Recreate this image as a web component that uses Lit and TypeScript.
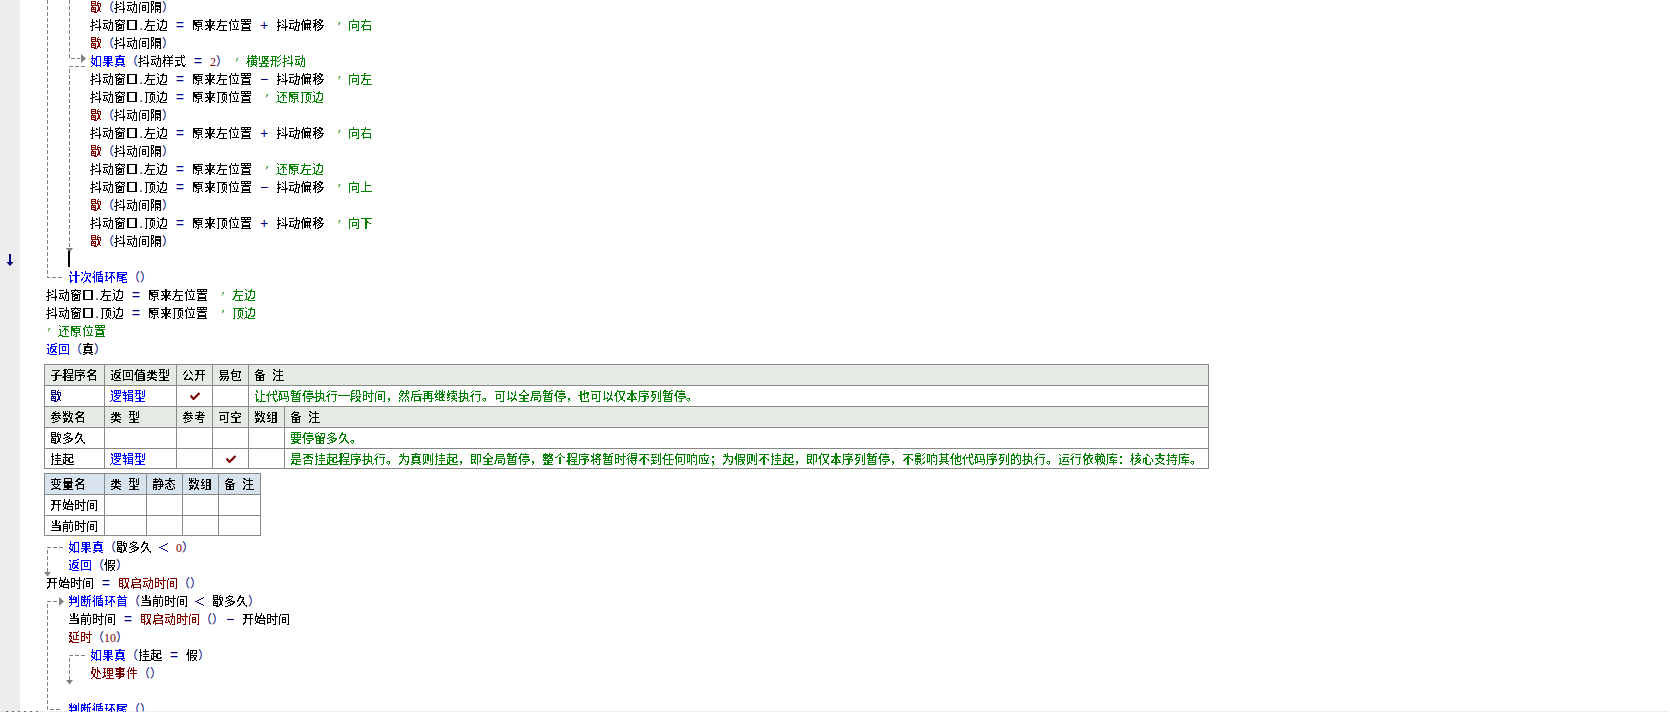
import { LitElement, html, css, svg } from "lit";
import { customElement } from "lit/decorators.js";

type Tok = [string, string];
interface Line { x: number; t: Tok[]; }

const K = "k", N = "n", B = "b", F = "f", C = "c", R = "r", O = "op";

function asciiSplit(text: string) {
  return text.split(/([\x00-\x7f’]+)/).filter((s) => s.length > 0);
}

const eq = (op: string): Tok[] =>
  op === "＜" ? [[N, ` ${op} `]] : [[N, " "], [O, op], [N, " "]];
const note = (s: string, lead = "  "): Tok[] => [[C, `${lead}’ `], [C, s]];
const rest: Tok[] = [[F, "歇"], [N, "（"], [B, "抖动间隔"], [N, "）"]];
const set = (lhs: string, rhs: Tok[], cm: string): Tok[] => [[B, `抖动窗口.${lhs}`], ...eq("="), ...rhs, ...note(cm)];
const calc = (lhs: string, base: string, op: string, cm: string) =>
  set(lhs, [[B, base], ...eq(op), [B, "抖动偏移"]], cm);

const top: Line[] = [
  { x: 90, t: rest },
  { x: 90, t: calc("左边", "原来左位置", "+", "向右") },
  { x: 90, t: rest },
  { x: 90, t: [[K, "如果真"], [N, "（"], [B, "抖动样式"], ...eq("="), [R, "2"], [N, "）"], ...note("横竖形抖动", " ")] },
  { x: 90, t: calc("左边", "原来左位置", "−", "向左") },
  { x: 90, t: set("顶边", [[B, "原来顶位置"]], "还原顶边") },
  { x: 90, t: rest },
  { x: 90, t: calc("左边", "原来左位置", "+", "向右") },
  { x: 90, t: rest },
  { x: 90, t: set("左边", [[B, "原来左位置"]], "还原左边") },
  { x: 90, t: calc("顶边", "原来顶位置", "−", "向上") },
  { x: 90, t: rest },
  { x: 90, t: calc("顶边", "原来顶位置", "+", "向下") },
  { x: 90, t: rest },
  { x: 68, t: [] },
  { x: 68, t: [[K, "计次循环尾"], [N, "（）"]] },
  { x: 46, t: set("左边", [[B, "原来左位置"]], "左边") },
  { x: 46, t: set("顶边", [[B, "原来顶位置"]], "顶边") },
  { x: 46, t: [[C, "’ "], [C, "还原位置"]] },
  { x: 46, t: [[K, "返回"], [N, "（"], [B, "真"], [N, "）"]] },
];

const bottom: Line[] = [
  { x: 68, t: [[K, "如果真"], [N, "（"], [B, "歇多久"], ...eq("＜"), [R, "0"], [N, "）"]] },
  { x: 68, t: [[K, "返回"], [N, "（"], [B, "假"], [N, "）"]] },
  { x: 46, t: [[B, "开始时间"], ...eq("="), [F, "取启动时间"], [N, "（）"]] },
  { x: 68, t: [[K, "判断循环首"], [N, "（"], [B, "当前时间"], ...eq("＜"), [B, "歇多久"], [N, "）"]] },
  { x: 68, t: [[B, "当前时间"], ...eq("="), [F, "取启动时间"], [N, "（）"], [O, "−"], [N, " "], [B, "开始时间"]] },
  { x: 68, t: [[F, "延时"], [N, "（"], [R, "10"], [N, "）"]] },
  { x: 90, t: [[K, "如果真"], [N, "（"], [B, "挂起"], ...eq("="), [B, "假"], [N, "）"]] },
  { x: 90, t: [[F, "处理事件"], [N, "（）"]] },
  { x: 90, t: [] },
  { x: 68, t: [[K, "判断循环尾"], [N, "（）"]] },
];

const check = html`<svg class="check" viewBox="0 0 10 8" width="10" height="8"><path d="M0.5 3.5L3.5 7L9.5 1" fill="none" stroke="#800000" stroke-width="2.2"/></svg>`;

const dashes = [
  "M47.5 0V277.5H62",
  "M69.5 0V58.5H80",
  "M85 66.5H69.5V248",
  "M63 547.5H47.5V572",
  "M57 601.5H47.5V709.5H62",
  "M85 655.5H69.5V680",
];
const arrows = [
  "M81 54L86 58.5L81 63Z",
  "M66 248L73 248L69.5 252.5Z",
  "M44 572L51 572L47.5 576.5Z",
  "M59 597L64 601.5L59 606Z",
  "M66 680L73 680L69.5 684.5Z",
];

@customElement("app-root")
export class AppRoot extends LitElement {
  static styles = css`
    :host { display: block; width: 1670px; height: 712px; overflow: hidden; position: relative; background: #fff;
      font: 12px/18px "Noto Sans CJK SC", "Noto Sans CJK JP", sans-serif; color: #000; }
    .page { display: flex; height: 712px; }
    .gutter { width: 20px; flex: none; background: #ececec; }
    .main { flex: 1; margin-top: -2px; min-width: 0; }
    .line { height: 18px; white-space: pre; line-height: 18px; }
    .a { font: 10px/0 "Liberation Mono", monospace; white-space: pre; }
    .d { font: 12px/0 "Liberation Serif", serif; }
    .op { display: inline-block; width: 12px; text-align: center; color: #000080; font: 14px/0 "Liberation Mono", monospace; }
    .k { color: #0000ff; } .n { color: #000080; } .b { color: #000; }
    .f { color: #800000; } .c { color: #008000; } .r { color: #800000; }
    .fx { filter: url(#crisp); }
    .t { filter: url(#crisp); display: block; }
    table { border-collapse: collapse; table-layout: fixed; margin-left: 24px; }
    td { border: 1px solid #888; padding: 0 0 0 5px; height: 20px; line-height: 18px; overflow: hidden; white-space: pre; box-sizing: border-box; }
    .proc { width: 1165px; margin-top: 6px; }
    .vars { width: 217px; margin-top: 4px; }
    .proc .h td { background: #e4ebe3; }
    .vars .h td { background: #d8e3ee; }
    td.m { text-align: center; padding: 0; }
    .check { display: block; margin: 0 auto; }
    .after { margin-top: 2px; }
    .over { position: absolute; left: 0; top: 0; pointer-events: none; }
    .caret { position: absolute; left: 68px; top: 251px; width: 2px; height: 16px; background: #000; }
    .defs { position: absolute; width: 0; height: 0; }
  `;

  private tok(t: Tok) {
    if (t[0] === O) return html`<span class="op">${t[1]}</span>`;
    return asciiSplit(t[1]).map((p) =>
      t[0] === R
        ? html`<span class="d r">${p}</span>`
        : /[\x00-\x7f’]/.test(p[0])
        ? html`<span class="a ${t[0]}">${p}</span>`
        : t[0] === N && p !== "＜"
        ? html`<span class="n">${p}</span>`
        : html`<span class="${t[0]} fx">${p}</span>`
    );
  }

  private lines(ls: Line[]) {
    return ls.map(
      (l) => html`<div class="line" style="padding-left:${l.x - 20}px">${l.t.map((t) => this.tok(t))}</div>`
    );
  }

  private c(s: string, cls = "") {
    const parts = s.split(" ");
    return html`<span class="t ${cls}">${parts.length === 2
      ? html`${parts[0]}<span class="a"> </span>${parts[1]}`
      : s}</span>`;
  }

  render() {
    return html`
      <svg class="defs"><filter id="crisp" x="-5%" y="-5%" width="110%" height="110%" color-interpolation-filters="sRGB">
        <feComponentTransfer><feFuncA type="discrete" tableValues="0 0 1 1 1"/></feComponentTransfer>
      </filter></svg>
      <div class="page">
        <div class="gutter"></div>
        <div class="main">
          ${this.lines(top)}
          <table class="proc">
            <colgroup><col style="width:60px"/><col style="width:72px"/><col style="width:36px"/><col style="width:36px"/><col style="width:36px"/><col/></colgroup>
            <tr class="h" style="height:21px"><td>${this.c("子程序名")}</td><td>${this.c("返回值类型")}</td><td>${this.c("公开")}</td><td>${this.c("易包")}</td><td colspan="2">${this.c("备 注")}</td></tr>
            <tr style="height:21px"><td>${this.c("歇", "n")}</td><td>${this.c("逻辑型", "k")}</td><td class="m">${check}</td><td></td><td colspan="2">${this.c("让代码暂停执行一段时间，然后再继续执行。可以全局暂停，也可以仅本序列暂停。", "c")}</td></tr>
            <tr class="h" style="height:21px"><td>${this.c("参数名")}</td><td>${this.c("类 型")}</td><td>${this.c("参考")}</td><td>${this.c("可空")}</td><td>${this.c("数组")}</td><td>${this.c("备 注")}</td></tr>
            <tr style="height:21px"><td>${this.c("歇多久")}</td><td></td><td></td><td></td><td></td><td>${this.c("要停留多久。", "c")}</td></tr>
            <tr style="height:20px"><td>${this.c("挂起")}</td><td>${this.c("逻辑型", "k")}</td><td></td><td class="m">${check}</td><td></td><td>${this.c("是否挂起程序执行。为真则挂起，即全局暂停，整个程序将暂时得不到任何响应；为假则不挂起，即仅本序列暂停，不影响其他代码序列的执行。运行依赖库：核心支持库。", "c")}</td></tr>
          </table>
          <table class="vars">
            <colgroup><col style="width:60px"/><col style="width:42px"/><col style="width:36px"/><col style="width:36px"/><col style="width:42px"/></colgroup>
            <tr class="h" style="height:21px"><td>${this.c("变量名")}</td><td>${this.c("类 型")}</td><td>${this.c("静态")}</td><td>${this.c("数组")}</td><td>${this.c("备 注")}</td></tr>
            <tr style="height:21px"><td>${this.c("开始时间")}</td><td></td><td></td><td></td><td></td></tr>
            <tr style="height:20px"><td>${this.c("当前时间")}</td><td></td><td></td><td></td><td></td></tr>
          </table>
          <div class="after">${this.lines(bottom)}</div>
        </div>
      </div>
      <svg class="over" width="1670" height="712" viewBox="0 0 1670 712">
        ${dashes.map((d) => svg`<path d=${d} fill="none" stroke="#808080" stroke-dasharray="4 2"/>`)}
        ${arrows.map((d) => svg`<path d=${d} fill="#808080"/>`)}
        <path d="M9 254h2v8h2.5L10 266 6.5 262H9Z" fill="#000080"/>
        <path d="M0 711.5H1670" fill="none" stroke="#dcdcdc" stroke-dasharray="1 1"/>
        <path d="M6 711.5H41" fill="none" stroke="#707070" stroke-dasharray="2 4"/>
      </svg>
      <div class="caret"></div>
    `;
  }
}
